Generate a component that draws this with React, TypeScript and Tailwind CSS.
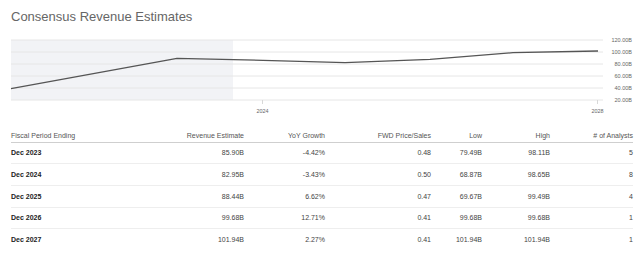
const rows = [
  ["Dec 2023", "85.90B", "-4.42%", "0.48", "79.49B", "98.11B", "5"],
  ["Dec 2024", "82.95B", "-3.43%", "0.50", "68.87B", "98.65B", "8"],
  ["Dec 2025", "88.44B", "6.62%", "0.47", "69.67B", "99.49B", "4"],
  ["Dec 2026", "99.68B", "12.71%", "0.41", "99.68B", "99.68B", "1"],
  ["Dec 2027", "101.94B", "2.27%", "0.41", "101.94B", "101.94B", "1"],
];

const headers = ["Revenue Estimate", "YoY Growth", "FWD Price/Sales", "Low", "High", "# of Analysts"];

const gridY = [40, 52, 64, 76, 88, 100];
const yLabels = ["120.00B", "100.00B", "80.00B", "60.00B", "40.00B", "20.00B"];

const points = [
  [11, 88.7],
  [177, 58.3],
  [263, 60.3],
  [345, 62.6],
  [430, 59.4],
  [513, 52.7],
  [598, 51],
];

function RevenueChart() {
  return (
    <svg width={640} height={84} viewBox="0 34 640 84" className="block">
      <rect x={11} y={40} width={222} height={60} fill="#f2f3f6" />
      {gridY.map((y) => (
        <line key={y} x1={11} x2={603} y1={y} y2={y} stroke="#e6e6e6" strokeWidth={1} />
      ))}
      <line x1={262.5} x2={262.5} y1={100} y2={104} stroke="#d8d8d8" strokeWidth={1} />
      <line x1={597.5} x2={597.5} y1={100} y2={104} stroke="#d8d8d8" strokeWidth={1} />
      <polyline
        points={points.map((p) => p.join(",")).join(" ")}
        fill="none"
        stroke="#555"
        strokeWidth={1.3}
        strokeLinejoin="round"
      />
      {yLabels.map((label, i) => (
        <text
          key={label}
          x={632}
          y={gridY[i] + 2}
          textAnchor="end"
          fontSize={5.5}
          fill="#666"
          fontFamily="'Liberation Sans', Arial, sans-serif"
        >
          {label}
        </text>
      ))}
      <text x={262.5} y={113} textAnchor="middle" fontSize={5.4} fill="#666" fontFamily="'Liberation Sans', Arial, sans-serif">
        2024
      </text>
      <text x={597.5} y={113} textAnchor="middle" fontSize={5.4} fill="#666" fontFamily="'Liberation Sans', Arial, sans-serif">
        2028
      </text>
    </svg>
  );
}

export default function App() {
  return (
    <div className="h-[261px] w-[640px] bg-white font-['Liberation_Sans',Arial,sans-serif]">
      <h1 className="pl-[11px] pt-[9px] text-[13px] leading-4 font-normal text-[#666]">Consensus Revenue Estimates</h1>
      <div className="mt-[9px]">
        <RevenueChart />
      </div>
      <div className="mt-px px-[11px]">
        <table className="w-[622px] table-fixed border-collapse text-[7px]">
          <colgroup>
            <col className="w-[120px]" />
            <col className="w-[113px]" />
            <col className="w-[81px]" />
            <col className="w-[106px]" />
            <col className="w-[51px]" />
            <col className="w-[68px]" />
            <col className="w-[83px]" />
          </colgroup>
          <thead>
            <tr className="h-[23px] border-b border-[#cfcfcf]">
              <th className="p-0 pb-[2px] text-left align-bottom leading-[9px] font-normal text-[#555]">Fiscal Period Ending</th>
              {headers.map((h) => (
                <th key={h} className="p-0 pb-[2px] text-right align-bottom leading-[9px] font-normal text-[#555]">
                  {h}
                </th>
              ))}
            </tr>
          </thead>
          <tbody>
            {rows.map((row, r) => (
              <tr key={row[0]} className={r < rows.length - 1 ? "h-[21.7px] border-b border-[#eeeeee]" : "h-[21.7px]"}>
                <td className="p-0 text-left leading-[9px] font-bold text-[#222]">{row[0]}</td>
                {row.slice(1).map((v, i) => (
                  <td key={i} className="p-0 text-right leading-[9px] text-[#444]">
                    {v}
                  </td>
                ))}
              </tr>
            ))}
          </tbody>
        </table>
      </div>
    </div>
  );
}
